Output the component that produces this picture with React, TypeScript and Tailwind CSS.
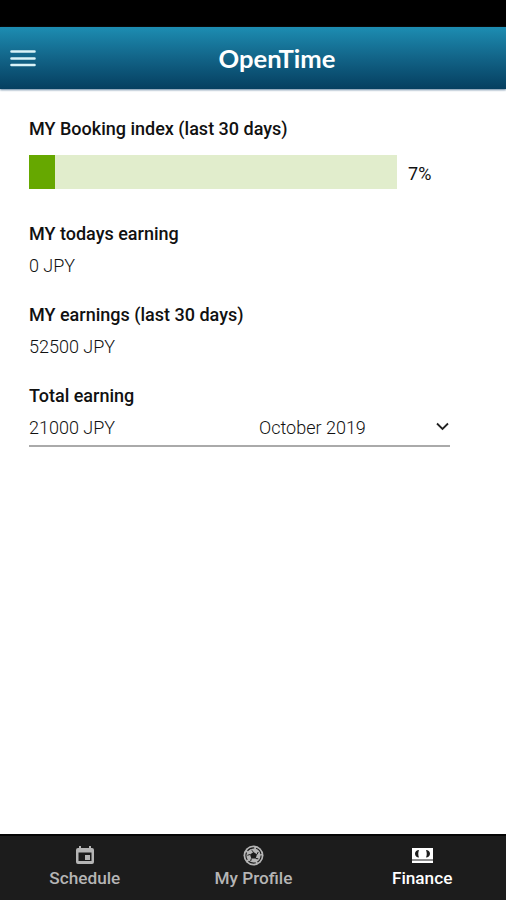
import type { ReactNode } from "react";
import clsx from "clsx";

const bookingIndex = 7;

function MenuIcon() {
  return (
    <svg width="26" height="17" viewBox="0 0 26 17" className="text-[#d9f3f8]">
      <path d="M1.500 1.500h23M1.500 8.500h23M1.500 15h23" stroke="currentColor" strokeWidth="2.600" strokeLinecap="round" />
    </svg>
  );
}

function CalendarIcon() {
  return (
    <svg width="18" height="18" viewBox="0 0 18 18">
      <path
        fill="currentColor"
        fillRule="evenodd"
        d="M3 0h2v2h8V0h2v2h1a2 2 0 0 1 2 2v12a2 2 0 0 1-2 2H2a2 2 0 0 1-2-2V4a2 2 0 0 1 2-2h1zM2.500 6.500v8.500h13v-8.500z"
      />
      <path fill="currentColor" d="M9 9h5v5H9z" />
    </svg>
  );
}

function BallIcon() {
  return (
    <svg width="21" height="21" viewBox="0 0 21 21" fill="none">
      <circle cx="10.500" cy="10.500" r="10" fill="currentColor" />
      {/* Seams around the centre patch */}
      <circle
        cx="10.500"
        cy="10.500"
        r="7.600"
        stroke="#1c1c1c"
        strokeWidth="1.100"
        strokeDasharray="7.750 1.800"
      />
      <path d="m10.500 7 3.500 2.500-1.300 4H8.300L7 9.500z" fill="#1c1c1c" />
      <path d="m10.500 7-2-1.800M14 9.500l1.200-2.500M12.700 13.500l2.600.300M8.300 13.500l-.600 2.500M7 9.500l-2.600.800" stroke="#1c1c1c" />
    </svg>
  );
}

function CashIcon() {
  return (
    <svg width="21" height="15" viewBox="0 0 21 15">
      <path
        fill="currentColor"
        fillRule="evenodd"
        d="M0 0h21v11.500H0zM7 2C4.800 2 3 3.500 3 5.700S4.800 9.500 7 9.500C6 7 6 4.500 7 2zm7 0c1 2.500 1 5 0 7.500 2.200 0 4-1.600 4-3.800S16.200 2 14 2z"
      />
      <path fill="currentColor" d="M0 12.500h21V15H0z" />
    </svg>
  );
}

function Stat({ title, value }: { title: string; value: string }) {
  return (
    <section className="mb-[17px]">
      <h2 className="h-8 text-lg leading-8 font-medium">{title}</h2>
      <p className="h-8 text-lg leading-8 font-light">{value}</p>
    </section>
  );
}

const tabs: { label: string; icon: ReactNode; active?: boolean }[] = [
  { label: "Schedule", icon: <CalendarIcon /> },
  { label: "My Profile", icon: <BallIcon /> },
  { label: "Finance", icon: <CashIcon />, active: true },
];

export default function App() {
  return (
    <div className="flex h-[900px] w-[506px] flex-col overflow-hidden bg-white font-['Roboto',sans-serif] text-[#111]">
      {/* Status bar */}
      <div className="h-[27px] shrink-0 bg-black" />

      <header className="grid h-[62px] shrink-0 grid-cols-[48px_1fr] items-center bg-linear-to-b from-[#1d8db2] via-[#126488] to-[#063f60] shadow-[0_1px_2px_#6484a0]">
        <button aria-label="Menu" className="pl-[10px]">
          <MenuIcon />
        </button>
        <h1 className="text-center font-['Lato',sans-serif] text-[25.600px] font-bold text-white">OpenTime</h1>
      </header>

      <main className="flex-1 pt-6 pl-[29px]">
        <h2 className="h-8 text-lg leading-8 font-medium">MY Booking index (last 30 days)</h2>
        <div className="mt-[10px] mb-[29px] flex h-[34px] items-center">
          <div className="h-full w-[368px] bg-[#e1edcc]">
            <div className="h-full bg-[#66a800]" style={{ width: `${bookingIndex}%` }} />
          </div>
          <span className="ml-[11px] pt-[3px] text-lg">{bookingIndex}%</span>
        </div>

        <Stat title="MY todays earning" value="0 JPY" />
        <Stat title="MY earnings (last 30 days)" value="52500 JPY" />

        <section className="w-[421px]">
          <h2 className="h-8 text-lg leading-8 font-medium">Total earning</h2>
          <div className="flex h-[35px] border-b-2 border-[#aaa] text-lg leading-8 font-light">
            <span className="w-[230px]">21000 JPY</span>
            <button className="flex flex-1 items-start justify-between">
              October 2019
              <svg width="14" height="9" viewBox="0 0 14 9" className="mt-[10px]">
                <path d="m1 1.500 5.500 5.500 5.500-5.500" fill="none" stroke="#222" strokeWidth="1.800" />
              </svg>
            </button>
          </div>
        </section>
      </main>

      <nav className="grid h-[66px] shrink-0 grid-cols-3 border-t-2 border-[#050505] bg-[#1c1c1c]">
        {tabs.map((tab) => (
          <button
            key={tab.label}
            className={clsx("flex flex-col items-center pt-[9px] pl-px", tab.active ? "text-white" : "text-[#b5b5b5]")}
          >
            <span className="flex h-5 items-center">{tab.icon}</span>
            <span className="pt-px text-[17.200px] leading-6 font-medium">{tab.label}</span>
          </button>
        ))}
      </nav>
    </div>
  );
}
